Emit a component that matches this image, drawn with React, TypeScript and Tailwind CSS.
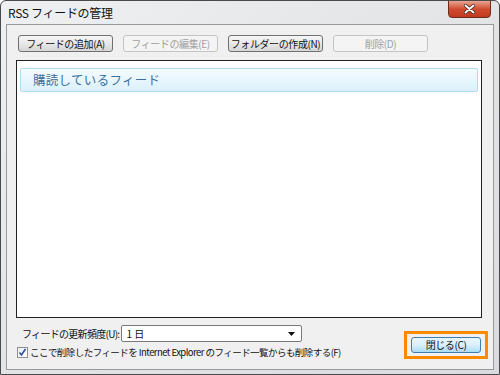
import React from 'react';

const font = { fontFamily: '"Noto Sans CJK JP", "Noto Sans", sans-serif' };

const DlgButton: React.FC<{ label: string; disabled?: boolean; className?: string }> = ({
  label,
  disabled,
  className = '',
}) => {
  return (
    <button
      className={`h-[17px] w-[95px] rounded-[3px] border text-[10px] tracking-[-0.4px] whitespace-nowrap leading-none flex items-center justify-center ${
        disabled
          ? 'border-[#c4c4c4] bg-[#f4f4f4] text-[#a0a0a0]'
          : 'border-[#707070] bg-gradient-to-b from-[#f6f6f6] via-[#e8e8e8] to-[#d6d6d6] text-[#111]'
      } ${className}`}
    >
      {label}
    </button>
  );
};

export default function App() {
  return (
    <div
      style={font}
      className="w-[500px] h-[375px] flex flex-col border border-[#4a4a4a] rounded-t-[6px] bg-gradient-to-br from-[#eef0f2] via-[#e2e4e6] to-[#d9dbde] overflow-hidden"
    >
      <div className="h-[23px] flex items-start justify-between pl-[7px] pr-[8px] shrink-0">
        <span className="text-[12px] leading-none mt-[6px] text-[#111] tracking-[-0.3px]">RSS フィードの管理</span>
        <div className="w-[43px] h-[18px] -mt-[1px] rounded-b-[4px] border border-[#6e2a1c] bg-gradient-to-b from-[#e8a493] via-[#cf4b30] to-[#c13a20] flex items-center justify-center">
          <svg width="11" height="10" viewBox="0 0 11 10">
            <path d="M1.5 1.5 L9.5 8.5 M9.5 1.5 L1.5 8.5" stroke="#3b1a12" strokeWidth="3.4" strokeLinecap="round" />
            <path d="M1.5 1.5 L9.5 8.5 M9.5 1.5 L1.5 8.5" stroke="#fff" strokeWidth="2" strokeLinecap="round" />
          </svg>
        </div>
      </div>
      <div className="flex-1 mx-[5px] mb-[4px] border border-[#9a9a9a] bg-[#f0f0f0] flex flex-col">
        <div className="flex gap-[10px] pl-[11px] pt-[10px]">
          <DlgButton label="フィードの追加(A)" />
          <DlgButton label="フィードの編集(E)" disabled />
          <DlgButton label="フォルダーの作成(N)" />
          <DlgButton label="削除(D)" disabled />
        </div>
        <div className="ml-[9px] mr-[11px] mt-[8px] h-[258px] border border-[#222] bg-white p-[3px] pt-[7px]">
          <div className="h-[24px] rounded-[2px] border border-[#b0dcf2] bg-gradient-to-b from-[#f4fbff] to-[#dcf0fb] flex items-center pl-[12px]">
            <span className="text-[12.5px] text-[#3b6f9c] tracking-[0.3px]">購読しているフィード</span>
          </div>
        </div>
        <div className="flex justify-between pl-[10px] pr-[5px] mt-[7px]">
          <div className="flex flex-col gap-[3px]">
            <div className="flex items-center gap-[2px] pl-[5px]">
              <span className="text-[10px] tracking-[-0.7px] whitespace-nowrap text-[#111]">フィードの更新頻度(U):</span>
              <div className="w-[181px] h-[17px] rounded-[2px] border border-[#7a7a7a] bg-white flex items-center justify-between pl-[4px] pr-[6px]">
                <span className="text-[10px] text-[#111]">1 日</span>
                <svg width="7" height="4" viewBox="0 0 7 4">
                  <path d="M0 0 L7 0 L3.5 4 Z" fill="#111" />
                </svg>
              </div>
            </div>
            <div className="flex items-center gap-[2px]">
              <div className="w-[11px] h-[11px] border border-[#8f8f8f] bg-gradient-to-br from-[#e8ecf0] to-[#ffffff] flex items-center justify-center">
                <svg width="9" height="9" viewBox="0 0 9 9">
                  <path d="M1.5 4.5 L3.5 7 L7.5 1" stroke="#2a4fa0" strokeWidth="1.6" fill="none" />
                </svg>
              </div>
              <span className="text-[9.5px] tracking-[-0.55px] whitespace-nowrap text-[#111]">ここで削除したフィードを Internet Explorer のフィード一覧からも削除する(F)</span>
            </div>
          </div>
          <div className="w-[84px] h-[28px] border-[3px] border-[#ff8a00] flex items-center justify-center mt-[6px]">
            <button className="w-[70px] h-[16px] rounded-[3px] border border-[#3c7fb1] bg-gradient-to-b from-[#eaf6fd] via-[#d9f0fc] to-[#a9dbf6] text-[10px] tracking-[-0.4px] leading-none text-[#111]">
              閉じる(C)
            </button>
          </div>
        </div>
      </div>
    </div>
  );
}
